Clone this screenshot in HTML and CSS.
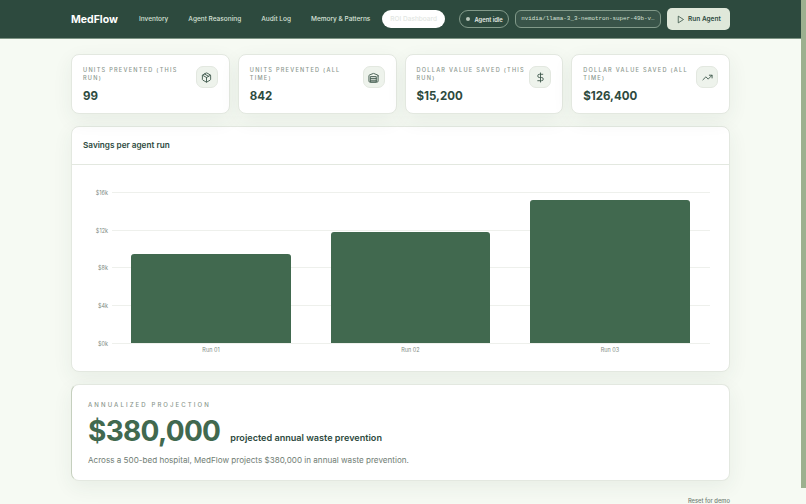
FILE: index.html
```html
<!DOCTYPE html>
<html lang="en">

<head>
    <meta charset="UTF-8">
    <meta name="viewport" content="width=device-width, initial-scale=1.0">
    <title>MedFlow - ROI Dashboard</title>
    <link rel="stylesheet" href="styles.css">
</head>

<body>
    <div class="app">
        <header class="topbar">
            <div class="brand">MedFlow</div>
            <nav class="nav">
                <a>Inventory</a>
                <a>Agent Reasoning</a>
                <a>Audit Log</a>
                <a>Memory &amp; Patterns</a>
                <a class="active">ROI Dashboard</a>
            </nav>
            <div class="status"><span class="dot"></span>Agent idle</div>
            <div class="model">nvidia/llama-3_3-nemotron-super-49b-v…</div>
            <button class="run">
                <svg width="9" height="9" viewBox="0 0 24 24" fill="none" stroke="currentColor" stroke-width="2" stroke-linejoin="round"><polygon points="6 3 20 12 6 21 6 3"/></svg>
                Run Agent
            </button>
        </header>

        <main class="page">
            <section class="stats">
                <div class="stat">
                    <div class="stat-text">
                        <div class="stat-label">Units prevented (this run)</div>
                        <div class="stat-value">99</div>
                    </div>
                    <div class="stat-icon">
                        <svg width="11" height="11" viewBox="0 0 24 24" fill="none" stroke="currentColor" stroke-width="2" stroke-linecap="round" stroke-linejoin="round"><path d="M21 8a2 2 0 0 0-1-1.730l-7-4a2 2 0 0 0-2 0l-7 4A2 2 0 0 0 3 8v8a2 2 0 0 0 1 1.730l7 4a2 2 0 0 0 2 0l7-4A2 2 0 0 0 21 16Z"/><path d="m3.300 7 8.700 5 8.700-5"/><path d="M12 22V12"/><path d="m7.500 4.270 9 5.150"/></svg>
                    </div>
                </div>
                <div class="stat">
                    <div class="stat-text">
                        <div class="stat-label">Units prevented (all time)</div>
                        <div class="stat-value">842</div>
                    </div>
                    <div class="stat-icon">
                        <svg width="11" height="11" viewBox="0 0 24 24" fill="none" stroke="currentColor" stroke-width="2" stroke-linecap="round" stroke-linejoin="round"><path d="M22 8.350V20a2 2 0 0 1-2 2H4a2 2 0 0 1-2-2V8.350A2 2 0 0 1 3.260 6.500l8-3.200a2 2 0 0 1 1.480 0l8 3.200A2 2 0 0 1 22 8.350Z"/><path d="M6 18h12"/><path d="M6 14h12"/><path d="M6 10h12v12H6z"/></svg>
                    </div>
                </div>
                <div class="stat">
                    <div class="stat-text">
                        <div class="stat-label">Dollar value saved (this run)</div>
                        <div class="stat-value">$15,200</div>
                    </div>
                    <div class="stat-icon">
                        <svg width="11" height="11" viewBox="0 0 24 24" fill="none" stroke="currentColor" stroke-width="2" stroke-linecap="round" stroke-linejoin="round"><line x1="12" x2="12" y1="2" y2="22"/><path d="M17 5H9.500a3.500 3.500 0 0 0 0 7h5a3.500 3.500 0 0 1 0 7H6"/></svg>
                    </div>
                </div>
                <div class="stat">
                    <div class="stat-text">
                        <div class="stat-label">Dollar value saved (all time)</div>
                        <div class="stat-value">$126,400</div>
                    </div>
                    <div class="stat-icon">
                        <svg width="11" height="11" viewBox="0 0 24 24" fill="none" stroke="currentColor" stroke-width="2" stroke-linecap="round" stroke-linejoin="round"><polyline points="22 7 13.500 15.500 8.500 10.500 2 17"/><polyline points="16 7 22 7 22 13"/></svg>
                    </div>
                </div>
            </section>

            <section class="card chart-card">
                <div class="chart-title">Savings per agent run</div>
                <svg class="chart" width="657" height="207" viewBox="0 0 657 207">
                    <g class="grid">
                        <line x1="40" x2="638" y1="27.500" y2="27.500"/>
                        <line x1="40" x2="638" y1="65.500" y2="65.500"/>
                        <line x1="40" x2="638" y1="102.500" y2="102.500"/>
                        <line x1="40" x2="638" y1="140.500" y2="140.500"/>
                        <line x1="40" x2="638" y1="178.500" y2="178.500"/>
                    </g>
                    <g class="y-labels">
                        <text x="36" y="30">$16k</text>
                        <text x="36" y="68">$12k</text>
                        <text x="36" y="105">$8k</text>
                        <text x="36" y="143">$4k</text>
                        <text x="36" y="181">$0k</text>
                    </g>
                    <g class="bars">
                        <path d="M59 178V92a3 3 0 0 1 3-3h154a3 3 0 0 1 3 3v86z"/>
                        <path d="M259 178V70a3 3 0 0 1 3-3h153a3 3 0 0 1 3 3v108z"/>
                        <path d="M458 178V38a3 3 0 0 1 3-3h154a3 3 0 0 1 3 3v140z"/>
                    </g>
                    <g class="x-labels">
                        <text x="139" y="187">Run 01</text>
                        <text x="338.500" y="187">Run 02</text>
                        <text x="538" y="187">Run 03</text>
                    </g>
                </svg>
            </section>

            <section class="card projection">
                <div class="projection-label">Annualized projection</div>
                <div class="projection-row">
                    <span class="projection-value">$380,000</span>
                    <span class="projection-note">projected annual waste prevention</span>
                </div>
                <p class="projection-text">Across a 500-bed hospital, MedFlow projects $380,000 in annual waste prevention.</p>
            </section>

            <div class="reset-row"><a class="reset">Reset for demo</a></div>
        </main>
    </div>

    <aside class="rail"></aside>
</body>

</html>
```

FILE: styles.css
```css
html {
    overflow: hidden;
}

body {
    display: flex;
    align-items: flex-start;
    margin: 0;
    background: #f6faf3;
    color: #2d4a3e;
    font-family: Inter, "Liberation Sans", sans-serif;
}

.app {
    flex: 1;
    min-width: 0;
}

/* the window's scroll thumb at the right edge */
.rail {
    flex: none;
    width: 5px;
    height: 488px;
    background: #9cb08f;
}

.topbar {
    display: flex;
    align-items: center;
    height: 38px;
    padding: 0 71px;
    background: #2d4a3e;
    border-bottom: 1px solid #7d9484;
}

.brand {
    width: 46px;
    margin-right: 22px;
    font-size: 10.500px;
    font-weight: 700;
    color: #fff;
    white-space: nowrap;
}

.nav {
    display: flex;
    align-items: center;
    gap: 20px;
    font-size: 6.500px;
    font-weight: 500;
    color: #d8e2d8;
    white-space: nowrap;
}

.nav .active {
    margin-left: -8px;
    padding: 5px 8px;
    border-radius: 10px;
    background: #fff;
    color: #e2e6e2;
    line-height: 8px;
}

.status {
    display: flex;
    align-items: center;
    gap: 3px;
    height: 16px;
    margin-left: 14px;
    padding: 0 5.500px;
    border: 1px solid #829a8a;
    border-radius: 9px;
    font-size: 5.800px;
    font-weight: 600;
    color: #e4ebe4;
    white-space: nowrap;
}

.dot {
    width: 4px;
    height: 4px;
    margin: 0 1px;
    border-radius: 50%;
    background: #b9c7bb;
}

.model {
    height: 16px;
    line-height: 16px;
    margin-left: 6px;
    padding: 0 5px;
    border: 1px solid #829a8a;
    border-radius: 6px;
    background: rgba(255, 255, 255, 0.06);
    font-family: "Liberation Mono", monospace;
    font-size: 5.850px;
    color: #d8e2d8;
    white-space: nowrap;
}

.run {
    display: flex;
    align-items: center;
    gap: 3px;
    height: 22px;
    margin-left: 6px;
    padding: 0 9.500px;
    border: 0;
    border-radius: 5px;
    background: #dfe8da;
    color: #2d4a3e;
    font-family: inherit;
    font-size: 6.500px;
    font-weight: 600;
    white-space: nowrap;
}

.page {
    width: 659px;
    margin: 0 auto;
    padding: 15px 0 0;
}

.stats {
    display: grid;
    grid-template-columns: repeat(4, 1fr);
    gap: 8px;
}

.stat,
.card {
    background: #fff;
    border: 1px solid #e3e8e0;
    border-radius: 8px;
    box-shadow: 0 6px 20px rgba(45, 74, 62, 0.07);
}

.stat {
    display: flex;
    justify-content: space-between;
    height: 60px;
    box-sizing: border-box;
    padding: 11px 11px 0 11px;
}

.stat-label {
    font-size: 5.600px;
    font-weight: 500;
    line-height: 8px;
    letter-spacing: 1.250px;
    text-transform: uppercase;
    color: #8b978e;
}

.stat-value {
    margin-top: 7px;
    font-size: 11.500px;
    font-weight: 700;
    line-height: 14px;
    color: #2d4a3e;
}

.stat-icon {
    flex: none;
    display: flex;
    align-items: center;
    justify-content: center;
    width: 22px;
    height: 22px;
    box-sizing: border-box;
    margin-left: 4px;
    border: 1px solid #e3e8e0;
    border-radius: 7px;
    background: #eef3ec;
    color: #40594d;
}

.chart-card {
    margin-top: 12px;
    height: 246px;
    box-sizing: border-box;
}

.chart-title {
    height: 37px;
    line-height: 36px;
    padding: 0 11px;
    border-bottom: 1px solid #e3e8e0;
    font-size: 8.200px;
    font-weight: 600;
    color: #2d4a3e;
}

.chart {
    display: block;
}

.grid line {
    stroke: #eef0ec;
    stroke-width: 1;
}

.y-labels text,
.x-labels text {
    font-size: 5.500px;
    fill: #7e8b82;
}

.y-labels text {
    text-anchor: end;
}

.x-labels text {
    text-anchor: middle;
}

.bars path {
    fill: #41694f;
}

.projection {
    margin-top: 12px;
    height: 97px;
    box-sizing: border-box;
    padding: 16px 15px 0 16px;
    border-left: 1px solid #c5cfbe;
}

.projection-label {
    font-size: 6px;
    font-weight: 500;
    line-height: 8px;
    letter-spacing: 2.100px;
    text-transform: uppercase;
    color: #8b978e;
}

.projection-row {
    display: flex;
    align-items: baseline;
    gap: 10px;
    margin-top: 4px;
}

.projection-value {
    font-size: 28px;
    font-weight: 700;
    line-height: 37px;
    letter-spacing: -0.700px;
    color: #41694f;
}

.projection-note {
    font-size: 9.100px;
    font-weight: 600;
    color: #2d4a3e;
}

.projection-text {
    margin: 4px 0 0;
    font-size: 8.100px;
    line-height: 12px;
    color: #707d74;
}

.reset-row {
    display: flex;
    justify-content: flex-end;
    margin-top: 16px;
}

.reset {
    font-size: 5.800px;
    font-weight: 500;
    line-height: 8px;
    color: #707d74;
}
```
